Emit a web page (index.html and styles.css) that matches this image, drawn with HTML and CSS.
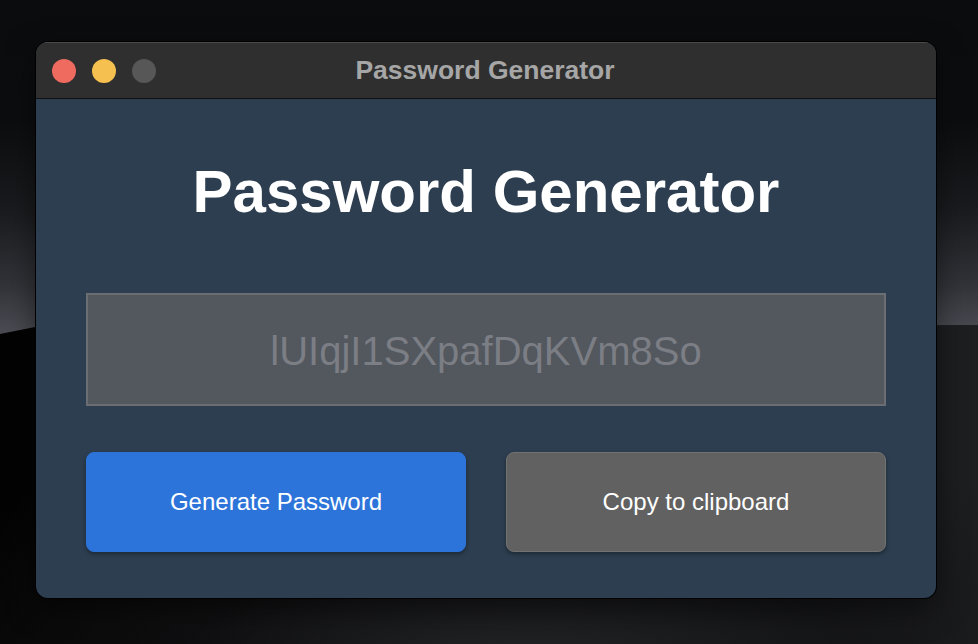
FILE: index.html
```html
<!DOCTYPE html>
<html lang="en">
<head>
<meta charset="utf-8">
<title>Password Generator</title>
<link rel="stylesheet" href="styles.css">
</head>
<body>
<div class="wallpaper"></div>
<div class="window">
  <div class="titlebar">
    <div class="lights">
      <span class="light red"></span>
      <span class="light yellow"></span>
      <span class="light gray"></span>
    </div>
    <div class="title">Password Generator</div>
  </div>
  <main class="content">
    <h1 class="heading">Password Generator</h1>
    <div class="field">lUIqjI1SXpafDqKVm8So</div>
    <div class="actions">
      <button class="btn btn-primary">Generate Password</button>
      <button class="btn btn-secondary">Copy to clipboard</button>
    </div>
  </main>
</div>
</body>
</html>
```
FILE: styles.css
```css
html, body {
  margin: 0;
  height: 100%;
}
body {
  position: relative;
  overflow: hidden;
  padding: 42px 0 0 36px;
  box-sizing: border-box;
  font-family: "Liberation Sans", Arial, sans-serif;
  background:
    radial-gradient(ellipse 700px 260px at 520px 680px, #26272a 0%, rgba(20,20,22,0.6) 50%, rgba(0,0,0,0) 100%),
    linear-gradient(90deg, #030303 0%, #0a0a0b 40%, #141517 80%, #1e1f21 100%);
}
.wallpaper {
  position: absolute;
  left: 0;
  top: 0;
  width: 100%;
  height: 336px;
  background:
    linear-gradient(180deg, #0b0c0e 0px, #0c0d0f 120px, #1a1b1e 210px, #323338 285px, #4a4b52 330px);
  clip-path: polygon(0 0, 100% 0, 100% 325px, 40px 326px, 0 334px);
}
.window {
  position: relative;
  width: 900px;
  height: 556px;
  border-radius: 12px;
  overflow: hidden;
  background: #2c3e50;
  box-shadow: 0 0 0 1px #000, 0 10px 30px rgba(0,0,0,0.5);
  display: flex;
  flex-direction: column;
}
.titlebar {
  flex: none;
  background: #2f2f2f;
  border-top: 1px solid #4a4a4a;
  border-bottom: 1px solid #111;
  box-sizing: border-box;
  height: 57px;
  display: flex;
  align-items: center;
  position: relative;
}
.lights {
  display: flex;
  gap: 16px;
  padding-left: 16px;
}
.light {
  width: 24px;
  height: 24px;
  border-radius: 50%;
  display: block;
}
.red { background: #ef6b60; }
.yellow { background: #f5c04f; }
.gray { background: #575757; }
.title {
  position: absolute;
  left: 0; right: 0;
  top: 12px;
  text-align: center;
  font-weight: bold;
  font-size: 26.5px;
  color: #a6a6a6;
  padding-right: 2px;
}
.content {
  flex: 1;
  padding: 58px 50px 0 50px;
  display: flex;
  flex-direction: column;
}
.heading {
  margin: 0;
  text-align: center;
  color: #ffffff;
  font-size: 60px;
  font-weight: bold;
  line-height: 69px;
}
.field {
  margin-top: 67px;
  height: 113px;
  box-sizing: border-box;
  border: 2px solid #6a6d72;
  background: #53575e;
  color: #7b7e84;
  font-size: 40px;
  padding-top: 3px;
  display: flex;
  align-items: center;
  justify-content: center;
}
.actions {
  margin-top: 46px;
  display: flex;
  gap: 40px;
}
.btn {
  flex: 1;
  height: 100px;
  border-radius: 8px;
  font-family: "Liberation Sans", Arial, sans-serif;
  font-size: 24px;
  color: #ffffff;
  box-shadow: 0 2px 4px rgba(0,0,0,0.35);
  cursor: pointer;
}
.btn-primary {
  background: #2c74d9;
  border: 1px solid #2c74d9;
}
.btn-secondary {
  background: #616161;
  border: 1px solid #727272;
}
```
